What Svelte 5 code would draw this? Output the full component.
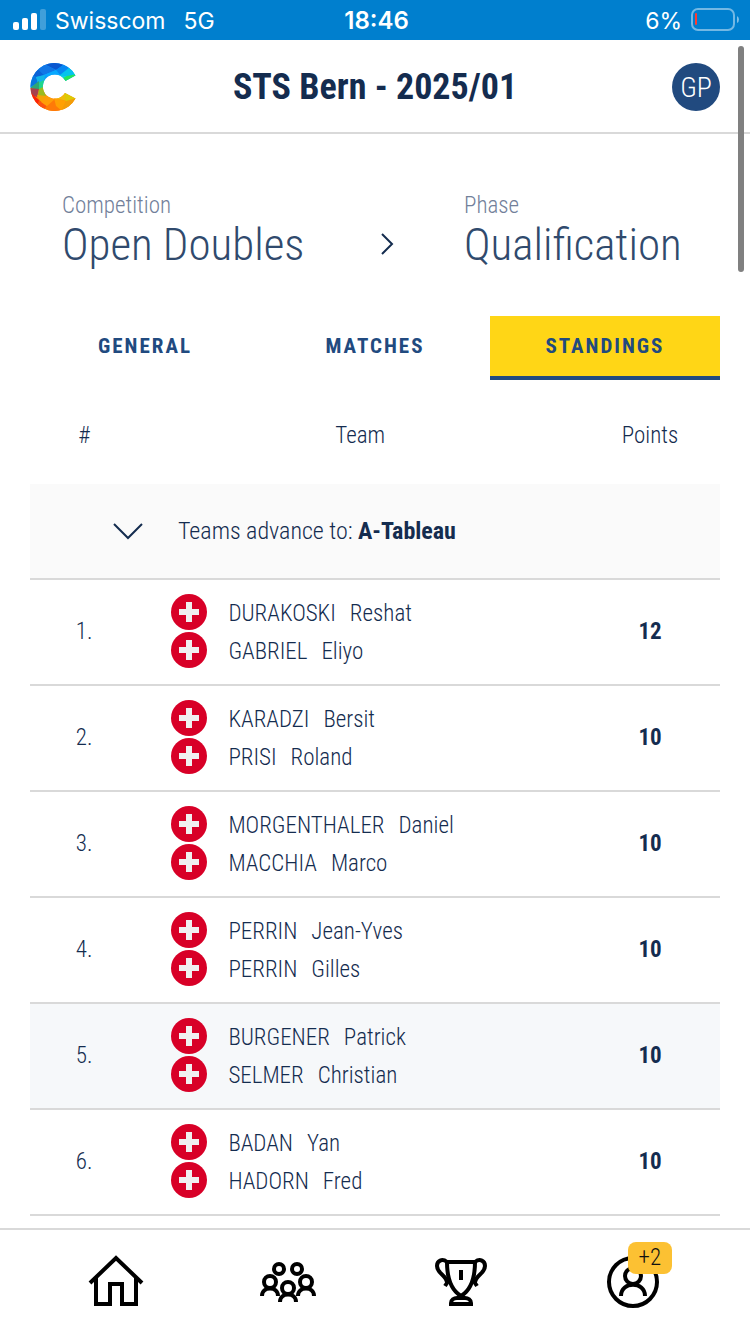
<script>
  const tabs = ['General', 'Matches', 'Standings'];
  let active = $state('Standings');
  let open = $state(true);

  const rows = [
    { rank: 1, points: 12, players: [['DURAKOSKI', 'Reshat'], ['GABRIEL', 'Eliyo']] },
    { rank: 2, points: 10, players: [['KARADZI', 'Bersit'], ['PRISI', 'Roland']] },
    { rank: 3, points: 10, players: [['MORGENTHALER', 'Daniel'], ['MACCHIA', 'Marco']] },
    { rank: 4, points: 10, players: [['PERRIN', 'Jean-Yves'], ['PERRIN', 'Gilles']] },
    { rank: 5, points: 10, own: true, players: [['BURGENER', 'Patrick'], ['SELMER', 'Christian']] },
    { rank: 6, points: 10, players: [['BADAN', 'Yan'], ['HADORN', 'Fred']] }
  ];
</script>

<div class="screen">
  <div class="status">
    <div class="carrier">
      <svg width="34" height="22" viewBox="0 0 34 22" fill="#fff" aria-hidden="true">
        <rect x="0" y="13" width="6" height="8" rx="2" />
        <rect x="9" y="9" width="6" height="12" rx="2" />
        <rect x="18" y="4" width="6" height="17" rx="2" />
        <rect x="27" y="0" width="6" height="21" rx="2" opacity=".25" />
      </svg>
      <span>Swisscom</span>
      <span class="network">5G</span>
    </div>
    <span class="clock">18:46</span>
    <div class="power">
      <span>6%</span>
      <svg width="50" height="24" viewBox="0 0 50 24" aria-hidden="true">
        <rect x="2" y="1" width="42" height="21" rx="6" fill="none" stroke="#fff" stroke-opacity=".45" stroke-width="2" />
        <rect x="5" y="5" width="2" height="12" rx="1" fill="#ff3b30" />
        <path d="M47 8q2 1 2 3.500t-2 3.500z" fill="#fff" fill-opacity=".5" />
      </svg>
    </div>
  </div>

  <header>
    <a class="logo" href="#home" aria-label="Home">
      <svg width="48" height="48" viewBox="0 0 48 48" aria-hidden="true">
        <defs>
          <clipPath id="ring">
            <path d="M45.500 12.500A24 24 0 1 0 45.500 35.500L35 30A12 12 0 1 1 35.500 18Z" />
          </clipPath>
        </defs>
        <g clip-path="url(#ring)">
          <rect width="48" height="25" fill="#0a9dfb" />
          <rect y="25" width="48" height="23" fill="#ff8a08" />
          <path d="M12 0H36L26 7Z" fill="#0b57cf" />
          <path d="M12 0L26 7L14 12L8 6Z" fill="#1176e6" />
          <path d="M26 7L36 0L40 8L30 12Z" fill="#0787f2" />
          <path d="M8 6L14 12L6 14L0 12Z" fill="#0b62d6" />
          <path d="M26 7L30 12L22 14L14 12Z" fill="#08a8ff" />
          <path d="M40 4L48 12L37 13L30 12Z" fill="#04c3ee" />
          <path d="M30 12L37 13L34 19L24 14Z" fill="#0bd3e6" />
          <path d="M37 13L48 11L34 20L33 15Z" fill="#24e65c" />
          <path d="M0 12L6 14L8 20L0 24Z" fill="#0877de" />
          <path d="M6 14L15 12L14 19L8 20Z" fill="#12b5e6" />
          <path d="M8 20L14 17L13 27L9 26Z" fill="#1fd68c" />
          <path d="M0 25L9 18L9 27Z" fill="#2fa575" />
          <path d="M0 25L9 26L7 34L0 32Z" fill="#a6414d" />
          <path d="M9 26L13 24L16 33L8 33Z" fill="#9abb20" />
          <path d="M0 29L9 37L14 48H0Z" fill="#fa2308" />
          <path d="M7 32L17 33L11 40Z" fill="#f4a305" />
          <path d="M9 37L17 43L14 48H6Z" fill="#fb5310" />
          <path d="M11 39L17 33L25 37L18 44Z" fill="#ff9d08" />
          <path d="M17 43L25 36L32 48H12Z" fill="#ff7a08" />
          <path d="M24 35L36 38L32 48L26 43Z" fill="#ffa003" />
          <path d="M24 35L35 29L37 38Z" fill="#efbd0a" />
          <path d="M34 28L48 36L36 39Z" fill="#dccb05" />
          <path d="M36 38L47 35L38 48H31Z" fill="#f39d08" />
        </g>
      </svg>
    </a>
    <h1>STS Bern - 2025/01</h1>
    <button class="avatar" aria-label="Profile GP">GP</button>
  </header>

  <main>
    <div class="crumbs">
      <a class="crumb" href="#competition"><span class="label">Competition</span><span class="value">Open Doubles</span></a>
      <svg class="next" width="14" height="24" viewBox="0 0 14 24" fill="none" stroke="#142c4f" stroke-width="2" aria-hidden="true">
        <path d="M2 2L12 12L2 22" />
      </svg>
      <a class="crumb" href="#phase"><span class="label">Phase</span><span class="value">Qualification</span></a>
    </div>

    <nav class="tabs" aria-label="Sections">
      {#each tabs as tab}
        <button class:active={tab === active} onclick={() => (active = tab)}>{tab}</button>
      {/each}
    </nav>

    <table>
      <colgroup><col class="c-rank" /><col /><col class="c-points" /></colgroup>
      <thead>
        <tr><th scope="col">#</th><th scope="col">Team</th><th scope="col">Points</th></tr>
      </thead>
      <tbody>
        <tr class="group">
          <th colspan="3" scope="colgroup">
            <button aria-expanded={open} onclick={() => (open = !open)}>
              <svg class:closed={!open} width="32" height="18" viewBox="0 0 32 18" fill="none" stroke="#142c4f" stroke-width="2" aria-hidden="true">
                <path d="M2 2L16 16L30 2" />
              </svg>
              <span>Teams advance to: <b>A-Tableau</b></span>
            </button>
          </th>
        </tr>
        {#if open}
          {#each rows as row}
            <tr class:own={row.own}>
              <td class="rank">{row.rank}.</td>
              <td class="team">
                {#each row.players as [last, first]}
                  <div class="player">
                    <svg width="36" height="36" viewBox="0 0 36 36" role="img" aria-label="Switzerland">
                      <circle cx="18" cy="18" r="18" fill="#d80027" />
                      <path d="M15 8h6v7h7v6h-7v7h-6v-7h-7v-6h7z" fill="#f0f0f0" />
                    </svg>
                    <span class="last">{last}</span>
                    <span>{first}</span>
                  </div>
                {/each}
              </td>
              <td class="points">{row.points}</td>
            </tr>
          {/each}
        {/if}
      </tbody>
    </table>
  </main>

  <nav class="bottom" aria-label="Main">
    <a href="#home" aria-label="Home">
      <svg width="56" height="56" viewBox="0 0 56 56" fill="none" stroke="#000" stroke-width="4" aria-hidden="true">
        <path d="M2 31L28 6L54 31M8 26V52H22V32H34V52H48V26" />
      </svg>
    </a>
    <a href="#players" aria-label="Players">
      <svg width="56" height="56" viewBox="0 0 56 56" fill="none" stroke="#000" stroke-width="4" aria-hidden="true">
        <circle cx="19" cy="17" r="5" /><circle cx="37" cy="17" r="5" />
        <circle cx="10" cy="30" r="6" /><circle cx="46" cy="30" r="6" /><circle cx="28" cy="36" r="6" />
        <path d="M2 44C2 34 18 34 18 44M38 44C38 34 54 34 54 44M20 50C20 40 36 40 36 50" />
      </svg>
    </a>
    <a href="#tournaments" aria-label="Tournaments">
      <svg width="56" height="56" viewBox="0 0 56 56" fill="none" stroke="#000" stroke-width="4" aria-hidden="true">
        <path d="M14 10H42C42 25 38 38 28 44C18 38 14 25 14 10Z" />
        <path d="M14 10C9 6 4 9 4 14C4 22 14 23 14 31L12 34M42 10C47 6 52 9 52 14C52 22 42 23 42 31L44 34M28 18V28" />
        <path d="M18 52V51C18 48 21 46 24 46H32C35 46 38 48 38 51V52Z" />
      </svg>
    </a>
    <a href="#account" aria-label="Account, 2 new">
      <span class="account">
        <svg width="56" height="56" viewBox="0 0 56 56" fill="none" stroke="#000" stroke-width="4" aria-hidden="true">
          <circle cx="28" cy="30" r="24" /><circle cx="28" cy="24" r="8" />
          <path d="M16 44C16 29 40 29 40 44" />
        </svg>
        <span class="badge">+2</span>
      </span>
    </a>
  </nav>
  <div class="scrollbar"></div>
</div>

<style>
  :global(body) { background: #fff; }
  .screen {
    position: relative;
    display: flex;
    flex-direction: column;
    min-height: 100vh;
    color: #142c4f;
    font-family: "Roboto Condensed", "Liberation Sans Narrow", Roboto, sans-serif;
    font-weight: 300;
    font-size: 24px;
  }
  * { box-sizing: border-box; }
  svg { display: block; flex: none; }
  a { color: inherit; text-decoration: none; }
  button { padding: 0; border: 0; background: none; color: inherit; font: inherit; cursor: pointer; }

  .status {
    display: grid;
    grid-template-columns: 1fr auto 1fr;
    align-items: center;
    height: 40px;
    padding: 0 10px 0 13px;
    background: #007fce;
    color: #fff;
    font: 400 23px/38px Inter, sans-serif;
  }
  .status span { padding-top: 2px; }
  .carrier, .power { display: flex; align-items: center; gap: 8px; }
  .power { justify-content: flex-end; }
  .network { margin-left: 10px; }
  .status .clock { font-size: 24px; font-weight: 600; }

  header {
    display: flex;
    align-items: center;
    justify-content: space-between;
    padding: 23px 30px 21px;
    border-bottom: 2px solid #d9d9d9;
  }
  h1 { margin: 0; font-size: 36px; line-height: 48px; font-weight: 700; }
  .avatar {
    width: 48px;
    height: 48px;
    border-radius: 50%;
    background: #214a7f;
    color: #fff;
    font-size: 28px;
  }

  main { padding: 59px 30px 0; }
  .crumbs { display: flex; align-items: center; padding: 0 32px; }
  .crumb { display: flex; flex-direction: column; width: 224px; white-space: nowrap; }
  .crumb:first-child { width: auto; flex: 1; }
  .next { margin: 24px 70px 0 0; }
  .label { font-size: 23px; line-height: 26px; color: #72809a; }
  .value { font-size: 45px; line-height: 52px; color: #304a6d; }

  .tabs { display: grid; grid-template-columns: repeat(3, 1fr); margin-top: 45px; }
  .tabs button {
    height: 64px;
    border-bottom: 4px solid transparent;
    color: #214a7f;
    font-size: 21px;
    font-weight: 700;
    letter-spacing: 2px;
    text-transform: uppercase;
  }
  .tabs .active { background: #ffd616; border-color: #214a7f; }

  table { width: 100%; border-collapse: collapse; table-layout: fixed; }
  .c-rank { width: 16%; }
  .c-points { width: 20%; }
  th { padding: 0; font-weight: 300; }
  thead th { height: 104px; padding: 6px 2px 0 0; font-size: 23px; }
  tbody tr { border-bottom: 2px solid #d9d9d9; }
  .group { background: #fafafa; }
  .group button { display: flex; align-items: center; gap: 34px; width: 100%; height: 94px; padding-left: 82px; }
  .closed { transform: rotate(-90deg); }
  b { font-weight: 700; }
  td { padding: 14px 0; font-size: 23px; line-height: 40px; }
  .rank, .points { padding-right: 2px; text-align: center; }
  .points { font-weight: 700; }
  .team { padding-left: 31px; }
  .player { display: flex; align-items: flex-start; height: 38px; white-space: nowrap; }
  .last { margin: 0 14px 0 21px; }
  .own { background: #f6f8fa; }

  .bottom {
    display: grid;
    grid-template-columns: repeat(4, 1fr);
    margin-top: auto;
    padding: 22px 31px 26px 30px;
    border-top: 2px solid #d9d9d9;
    background: #fff;
  }
  .bottom a { display: flex; justify-content: center; }
  .account { position: relative; }
  .badge {
    position: absolute;
    top: -10px;
    left: 23px;
    width: 44px;
    height: 32px;
    border-radius: 8px;
    background: #fcc133;
    color: #111;
    font-size: 23px;
    line-height: 32px;
    text-align: center;
  }
  .scrollbar {
    position: absolute;
    top: 46px;
    right: 6px;
    width: 6px;
    height: 226px;
    border-radius: 3px;
    background: #808080;
  }
</style>
